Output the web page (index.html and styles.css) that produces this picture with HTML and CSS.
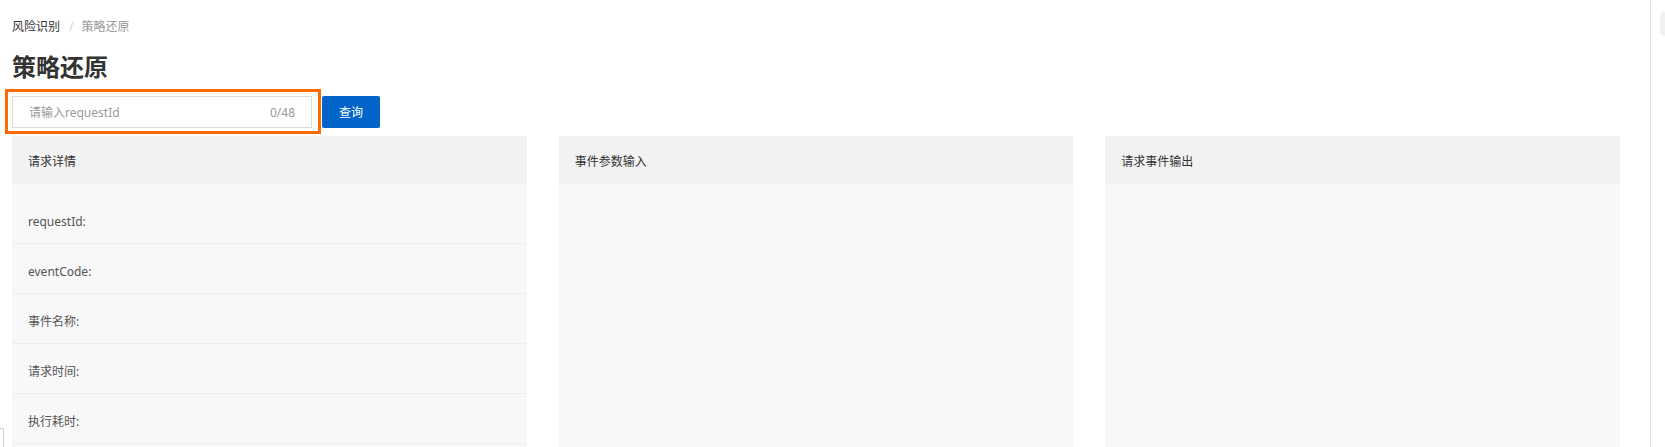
FILE: index.html
```html
<!DOCTYPE html>
<html lang="zh-CN">
<head>
    <meta charset="UTF-8">
    <title>策略还原</title>
    <link rel="stylesheet" href="styles.css">
</head>
<body>
<div class="page">
  <div class="main">
    <div class="breadcrumb">
      <span class="crumb">风险识别</span>
      <span class="sep">/</span>
      <span class="crumb current">策略还原</span>
    </div>
    <h1 class="title">策略还原</h1>

    <div class="toolbar">
      <div class="search highlight">
        <input type="text" class="search-input" placeholder="请输入requestId">
        <span class="counter">0/48</span>
      </div>
      <button type="button" class="btn-primary">查询</button>
    </div>

    <div class="panels">
      <div class="panel">
        <div class="panel-head">请求详情</div>
        <div class="panel-body">
          <div class="row">requestId:</div>
          <div class="row">eventCode:</div>
          <div class="row">事件名称:</div>
          <div class="row">请求时间:</div>
          <div class="row">执行耗时:</div>
        </div>
      </div>
      <div class="panel">
        <div class="panel-head">事件参数输入</div>
        <div class="panel-body"></div>
      </div>
      <div class="panel">
        <div class="panel-head">请求事件输出</div>
        <div class="panel-body"></div>
      </div>
    </div>
  </div>
  <div class="scrollbar">
    <div class="thumb"></div>
  </div>
</div>
<div class="corner-widget"></div>
</body>
</html>
```

FILE: styles.css
```css
* {
  box-sizing: border-box;
}

html, body {
  margin: 0;
  height: 100%;
  overflow: hidden;
  background: #fff;
  font-family: "Noto Sans", "Noto Sans CJK SC", sans-serif;
  font-size: 12px;
  color: #333;
}

.page {
  display: flex;
  height: 100%;
}

.main {
  flex: 1;
  padding: 17px 30px 0 12px;
  overflow: hidden;
}

.breadcrumb {
  line-height: 20px;
  height: 20px;
  display: flex;
  align-items: center;
}

.crumb {
  color: #333;
}

.crumb.current {
  color: #999;
}

.sep {
  color: #ccc;
  margin: 0 8px 0 9px;
}

.title {
  margin: 14px 0 0;
  font-size: 24px;
  line-height: 32px;
  font-weight: bold;
  color: #333;
}

.toolbar {
  display: flex;
  align-items: center;
  margin-top: 13px;
  height: 32px;
}

.search {
  position: relative;
  width: 300px;
  height: 32px;
  border: 1px solid #dcdcdc;
  background: #fff;
  display: flex;
  align-items: center;
  padding: 0 16px 0 16px;
}

/* orange annotation frame around the input */
.highlight::after {
  content: "";
  position: absolute;
  top: -8px;
  left: -8px;
  right: -10px;
  bottom: -7px;
  border: 3px solid #ff6a00;
}

.search-input {
  flex: 1;
  border: none;
  outline: none;
  padding: 0;
  font-family: inherit;
  font-size: 12px;
  color: #333;
  background: transparent;
}

.search-input::placeholder {
  color: #999;
}

.counter {
  color: #999;
  font-size: 12px;
}

.btn-primary {
  margin-left: 10px;
  width: 58px;
  height: 32px;
  border: none;
  border-radius: 2px;
  background: #0064c8;
  color: #fff;
  font-family: inherit;
  font-size: 12px;
  padding: 0;
}

.panels {
  display: grid;
  grid-template-columns: repeat(3, 1fr);
  column-gap: 32px;
  margin-top: 8px;
}

.panel {
  display: flex;
  flex-direction: column;
  height: 400px;
}

.panel-head {
  background: #f2f2f2;
  height: 48px;
  padding: 15px 16px 11px;
  line-height: 22px;
  color: #333;
}

.panel-body {
  flex: 1;
  background: #f8f8f8;
  padding-top: 10px;
}

.row {
  height: 50px;
  padding: 17px 16px 10px;
  line-height: 22px;
  border-bottom: 1px solid #eeeeee;
  color: #555;
}

.scrollbar {
  width: 15px;
  border-left: 1px solid #e4e4e4;
  background: #fff;
  padding: 12px 0 0 9px;
}

.thumb {
  width: 10px;
  height: 24px;
  border-radius: 5px 0 0 5px;
  background: #f1f1f1;
}

.corner-widget {
  position: fixed;
  left: -20px;
  top: 428px;
  width: 24px;
  height: 30px;
  border: 1px solid #cfcfcf;
  background: #fff;
}
```
